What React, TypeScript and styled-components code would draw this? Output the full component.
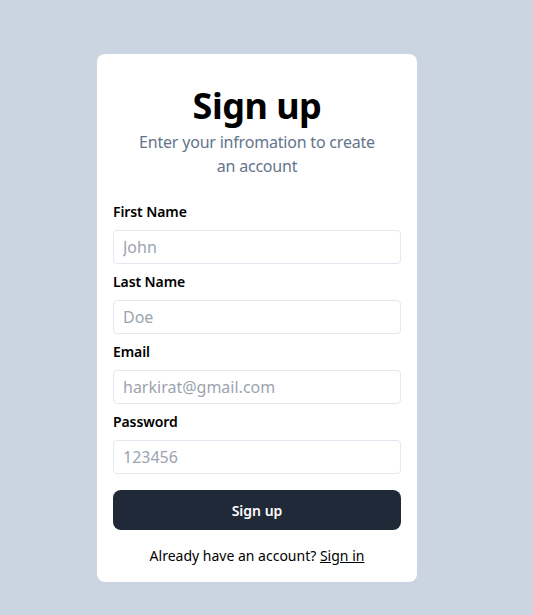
import * as React from 'react';
import styled, { createGlobalStyle } from 'styled-components'

const GlobalStyle = createGlobalStyle`
  body {
    margin: 0;
    background-color: #cbd5e1;
    font-family: "Noto Sans", "Open Sans", sans-serif;
  }
`

const Page = styled.div`
  min-height: 615px;
  display: flex;
  justify-content: center;
  align-items: flex-start;
  padding: 54px 19px 0 0;
  box-sizing: border-box;
`

const Card = styled.div`
  width: 320px;
  background-color: #ffffff;
  border-radius: 8px;
  padding: 32px 16px 16px;
  box-sizing: border-box;
  text-align: center;
`

const Heading = styled.h1`
  margin: 0;
  font-size: 36px;
  line-height: 40px;
  font-weight: 700;
  letter-spacing: -0.5px;
  color: #000000;
`

const SubHeading = styled.p`
  margin: 4px 0 0;
  padding: 0 18px;
  font-size: 16px;
  line-height: 24px;
  letter-spacing: -0.2px;
  color: #64748b;
`

const Form = styled.form`
  margin-top: 24px;
  text-align: left;
`

const Field = styled.div`
  padding-bottom: 8px;
`

const Label = styled.label`
  display: block;
  font-size: 14px;
  line-height: 20px;
  font-weight: 600;
  letter-spacing: -0.1px;
  color: #000000;
  margin-bottom: 8px;
`

const Input = styled.input`
  display: block;
  width: 100%;
  height: 34px;
  box-sizing: border-box;
  padding: 0 9px;
  border: 1px solid #e2e8f0;
  border-radius: 4px;
  font-family: inherit;
  font-size: 16px;
  color: #0f172a;
  outline: none;

  &::placeholder {
    color: #9ca3af;
  }
`

const Button = styled.button`
  display: block;
  width: 100%;
  height: 40px;
  margin-top: 8px;
  border: none;
  border-radius: 8px;
  background-color: #1f2937;
  color: #ffffff;
  font-family: inherit;
  font-size: 14px;
  font-weight: 600;
  cursor: pointer;
`

const Footer = styled.div`
  margin-top: 16px;
  font-size: 14px;
  line-height: 20px;
  color: #000000;
  text-align: center;
`

const Link = styled.a`
  color: inherit;
  text-decoration: underline;
  cursor: pointer;
`

interface FieldProps {
  label: string;
  placeholder: string;
  type?: string;
}
const InputField = (props: FieldProps) => {
  return (
    <Field>
      <Label>{props.label}</Label>
      <Input type={props.type || 'text'} placeholder={props.placeholder} />
    </Field>
  )
}

export default function App() {
  return (
    <Page>
      <GlobalStyle />
      <Card>
        <Heading>Sign up</Heading>
        <SubHeading>Enter your infromation to create an account</SubHeading>
        <Form onSubmit={(e) => e.preventDefault()}>
          <InputField label="First Name" placeholder="John" />
          <InputField label="Last Name" placeholder="Doe" />
          <InputField label="Email" placeholder="harkirat@gmail.com" />
          <InputField label="Password" placeholder="123456" type="password" />
          <Button type="submit">Sign up</Button>
        </Form>
        <Footer>
          Already have an account? <Link>Sign in</Link>
        </Footer>
      </Card>
    </Page>
  )
}
